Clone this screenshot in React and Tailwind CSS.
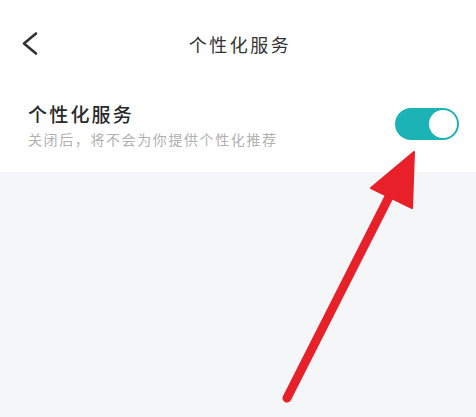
export default function App() {
  return (
    <div
      className="relative w-[476px] h-[417px] bg-[#f5f6f8] overflow-hidden"
      style={{ fontFamily: '"Noto Sans CJK SC", "Noto Sans", sans-serif' }}
    >
      <div className="bg-white">
        <div className="relative h-[86px] flex items-center justify-center">
          <div className="absolute left-[20px] top-[31px]">
            <svg width="20" height="25" viewBox="0 0 20 25">
              <path d="M16 2.5 L4 12.5 L16 22.5" fill="none" stroke="#333" strokeWidth="2.6" strokeLinecap="round" strokeLinejoin="round" />
            </svg>
          </div>
          <div className="text-[18px] tracking-[2.5px] text-[#333] leading-none pl-[4px] mt-[1px]">个性化服务</div>
        </div>
        <div className="h-[86px] flex items-center pl-[28px] pr-[17px]">
          <div className="flex-1 flex flex-col mt-[-8px]">
            <div className="text-[19px] tracking-[2.2px] font-medium text-[#2a2a2a] leading-[24px]">个性化服务</div>
            <div className="text-[14px] tracking-[1.6px] text-[#b0b0b0] leading-[20px] mt-[3px]">关闭后，将不会为你提供个性化推荐</div>
          </div>
          <div className="w-[64px] h-[32px] rounded-full bg-[#1bb3b5] flex items-center justify-end pr-[2px] mt-[-10px]">
            <div className="w-[28px] h-[28px] rounded-full bg-white" />
          </div>
        </div>
      </div>
      <svg className="absolute left-0 top-0 pointer-events-none" width="476" height="417" viewBox="0 0 476 417">
        <line x1="287" y1="398" x2="395" y2="185" stroke="#e8202a" strokeWidth="9" strokeLinecap="round" />
        <polygon points="414,152 371,188 412,208" fill="#e8202a" stroke="#e8202a" strokeWidth="2" strokeLinejoin="round" />
      </svg>
    </div>
  );
}
